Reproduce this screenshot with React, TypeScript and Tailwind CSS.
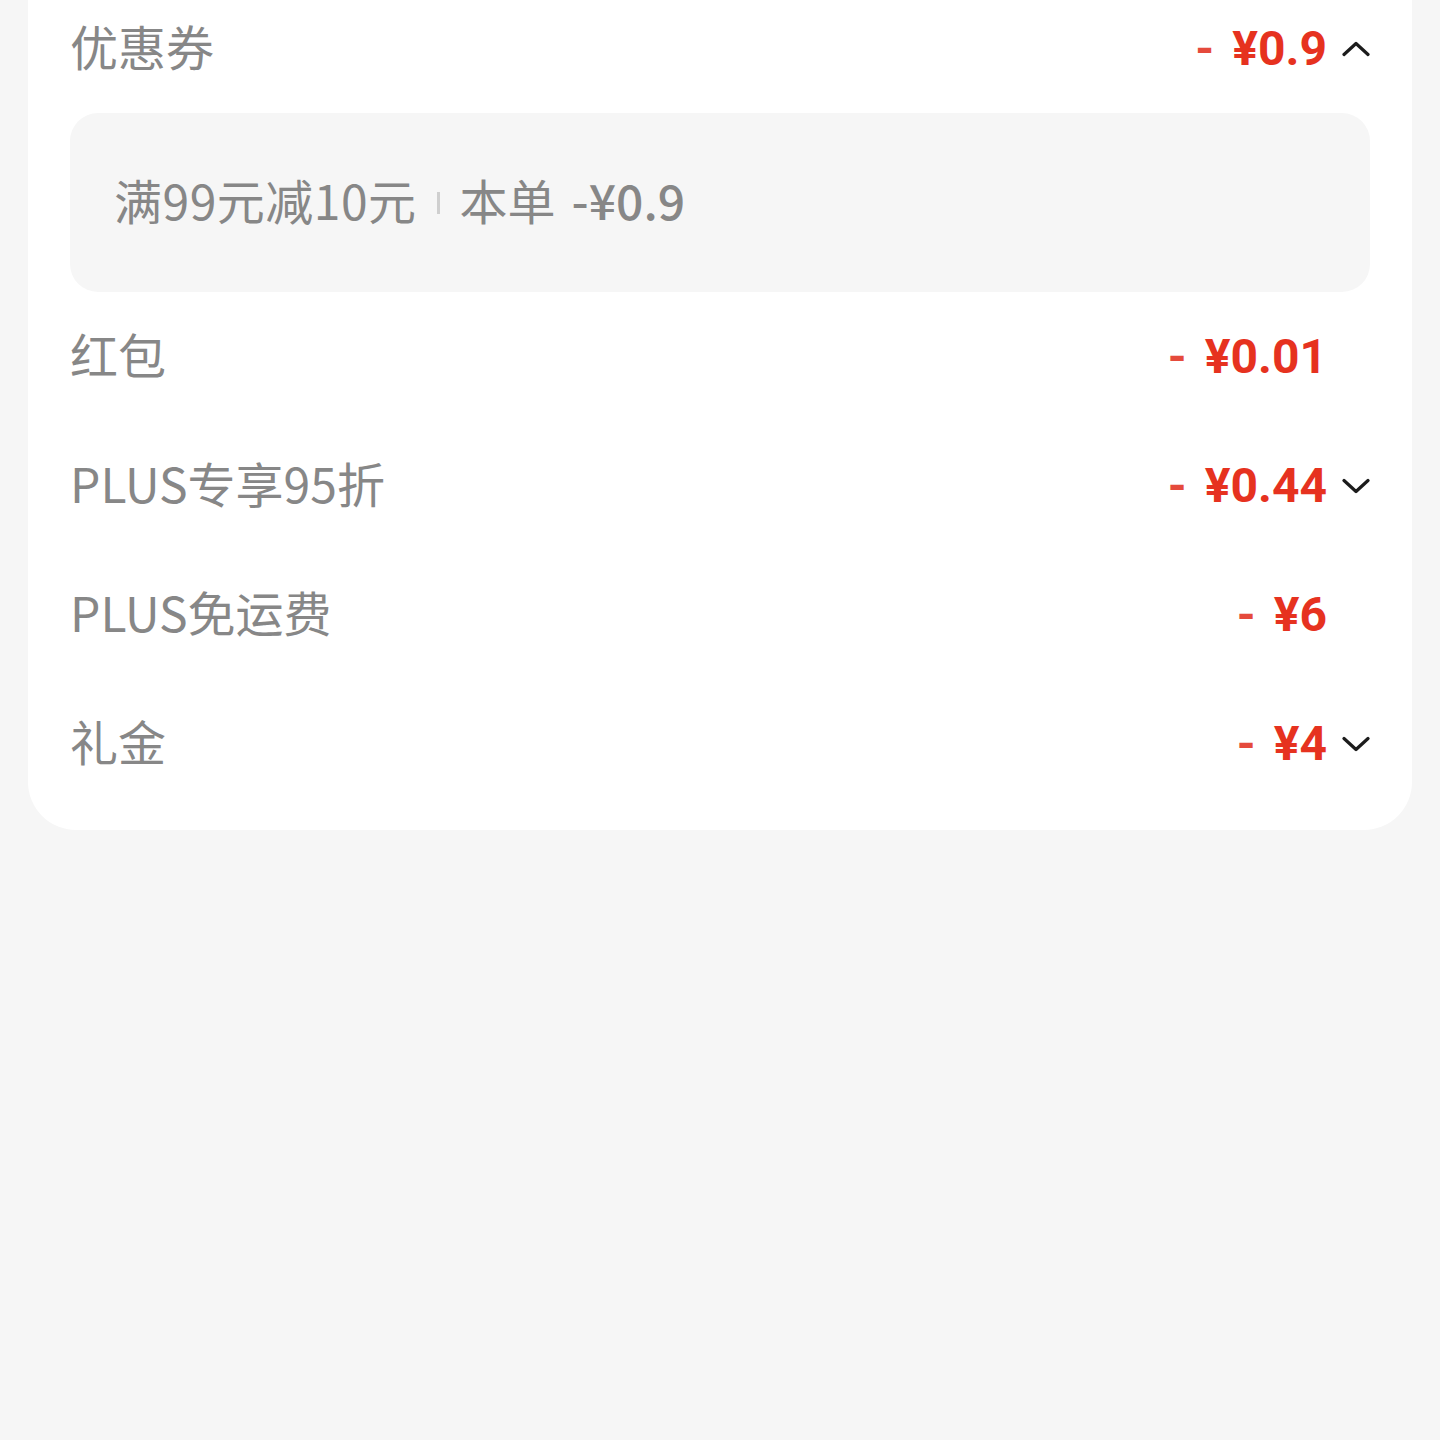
import React from "react";

function Chevron({ up }: { up?: boolean }) {
  return (
    <svg width="28" height="16" viewBox="0 0 28 16" fill="none">
      <polyline
        points={up ? "2,13.5 14,2.5 26,13.5" : "2,2.5 14,13.5 26,2.5"}
        stroke="#1c1c1c"
        strokeWidth="3.2"
        strokeLinecap="round"
        strokeLinejoin="round"
      />
    </svg>
  );
}

function Amount({ value }: { value: string }) {
  return (
    <span
      className="flex items-center text-[48px] font-bold leading-none text-[#e6321f]"
      style={{ fontFamily: "Roboto, 'Liberation Sans', sans-serif" }}
    >
      <span className="text-[#e54a3c]">-</span>
      <span className="ml-[18px]">¥{value}</span>
    </span>
  );
}

type Row = { label: string; value: string; chevron?: "up" | "down" };

function Line({ label, value, chevron }: Row) {
  return (
    <div className="flex h-[129px] items-center justify-between">
      <span className="pb-[8px] text-[48px] leading-none text-[#878787]">{label}</span>
      <div className="flex items-center">
        <Amount value={value} />
        <div className="ml-[15px] flex w-[28px] justify-center">
          {chevron && <Chevron up={chevron === "up"} />}
        </div>
      </div>
    </div>
  );
}

export default function App() {
  const rows: Row[] = [
    { label: "红包", value: "0.01" },
    { label: "PLUS专享95折", value: "0.44", chevron: "down" },
    { label: "PLUS免运费", value: "6" },
    { label: "礼金", value: "4", chevron: "down" },
  ];

  return (
    <div
      className="flex min-h-screen flex-col bg-[#f6f6f6]"
      style={{ fontFamily: "'Noto Sans CJK SC', 'Noto Sans', sans-serif" }}
    >
      <div className="mx-[28px] -mt-[16px] rounded-b-[48px] bg-white px-[42px] pb-[22px]">
        <Line label="优惠券" value="0.9" chevron="up" />

        <div className="flex h-[179px] items-center rounded-[28px] bg-[#f6f6f6] px-[44px] pb-[8px] text-[48px] leading-none text-[#878787]">
          <span className="tracking-[0.5px]">满99元减10元</span>
          <span className="mx-[20px] mt-[8px] h-[22px] w-[3px] bg-[#cfcfcf]" />
          <span>本单</span>
          <span className="ml-[16px] font-medium">-¥0.9</span>
        </div>

        {rows.map((r) => (
          <Line key={r.label} {...r} />
        ))}
      </div>
    </div>
  );
}
